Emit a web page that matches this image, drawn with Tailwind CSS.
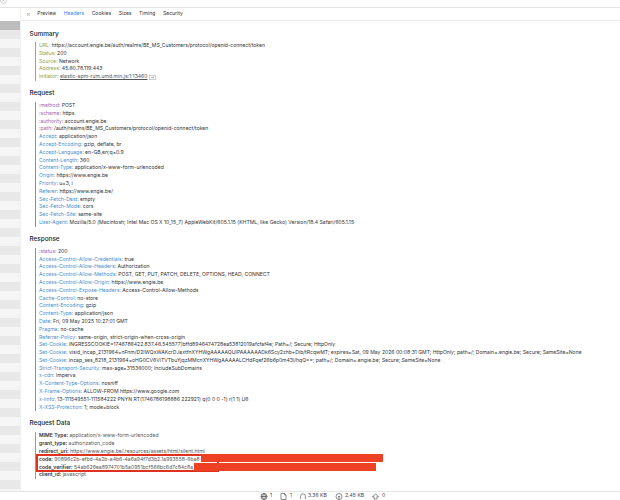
<!DOCTYPE html>
<html lang="en">
<head>
<meta charset="UTF-8">
<title>Network request headers</title>
<script src="https://cdn.jsdelivr.net/npm/@tailwindcss/browser@4"></script>
</head>
<body class="relative w-[620px] h-[500px] overflow-hidden bg-white font-['Inter','Liberation_Sans',sans-serif] text-[5.1px] leading-[7.8px] text-[#333]">
  <div class="h-[8px] border-b border-[#e4e4e4] bg-white overflow-hidden">
    <svg class="-mt-[3px] ml-[0px]" width="7" height="7" viewBox="0 0 7 7" fill="none" stroke="#bbb" stroke-width=".6"><circle cx="3.5" cy="3.5" r="3"/><path d="M2.3 2.3l2.4 2.4M4.7 2.3L2.3 4.7"/></svg>
  </div>
  <div class="flex h-[483px]">
    <!-- request list stripes -->
    <div class="w-[20px] shrink-0 flex flex-col">
      <div class="h-[13px] bg-white"></div>
      <div class="h-[9px] bg-[#bdbdbd]"></div>
      <div class="flex-1 bg-[repeating-linear-gradient(to_bottom,#e8e8e8_0,#e8e8e8_9px,#f5f5f5_9px,#f5f5f5_18px)]"></div>
    </div>
    <div class="flex-1 flex flex-col min-w-0 border-l border-[#f0f0f0]">
      <nav class="h-[13px] shrink-0 flex items-center gap-[7.5px] pl-[5px] border-b border-[#ececec] text-[#333]">
        <span class="text-[#aaa] text-[7px] -mr-[1px]">×</span>
        <span>Preview</span>
        <span class="text-[#3b82f6]">Headers</span>
        <span>Cookies</span>
        <span>Sizes</span>
        <span>Timing</span>
        <span>Security</span>
      </nav>
      <main class="flex-1 pl-[8.5px] pt-[8.5px] min-w-0 whitespace-nowrap">
        <h2 class="text-[6.4px] leading-[8px] font-medium text-[#222]">Summary</h2>
        <div class="mt-[4.5px] ml-[5px] border-l border-[#9fb04c] pl-[3.5px]">
          <div><span class="text-[#8fa24a]">URL:</span> https://account.engie.be/auth/realms/BE_MS_Customers/protocol/openid-connect/token</div>
          <div><span class="text-[#8fa24a]">Status:</span> 200</div>
          <div><span class="text-[#8fa24a]">Source:</span> Network</div>
          <div><span class="text-[#8fa24a]">Address:</span> 45.60.78.119:443</div>
          <div class="flex items-center gap-[2px]"><span><span class="text-[#8fa24a]">Initiator:</span> <span class="underline text-[#555]">elastic-apm-rum.umd.min.js:1:13460</span></span>
            <svg width="7" height="5" viewBox="0 0 7 5" fill="none" stroke="#999" stroke-width=".6"><rect x=".3" y=".3" width="6.4" height="4.4" rx=".8"/><path d="M2 2.5h3M3.8 1.5l1.2 1-1.2 1"/></svg>
          </div>
        </div>

        <h2 class="mt-[8px] text-[6.4px] leading-[8px] font-medium text-[#222]">Request</h2>
        <div class="mt-[5px] ml-[5px] border-l border-[#5b9bd5] pl-[3.5px]">
          <div><span class="text-[#a55fa8]">:method:</span> POST</div>
          <div><span class="text-[#a55fa8]">:scheme:</span> https</div>
          <div><span class="text-[#a55fa8]">:authority:</span> account.engie.be</div>
          <div><span class="text-[#a55fa8]">:path:</span> /auth/realms/BE_MS_Customers/protocol/openid-connect/token</div>
          <div><span class="text-[#4a8ecb]">Accept:</span> application/json</div>
          <div><span class="text-[#4a8ecb]">Accept-Encoding:</span> gzip, deflate, br</div>
          <div><span class="text-[#4a8ecb]">Accept-Language:</span> en-GB,en;q=0.9</div>
          <div><span class="text-[#4a8ecb]">Content-Length:</span> 360</div>
          <div><span class="text-[#4a8ecb]">Content-Type:</span> application/x-www-form-urlencoded</div>
          <div><span class="text-[#4a8ecb]">Origin:</span> https://www.engie.be</div>
          <div><span class="text-[#4a8ecb]">Priority:</span> u=3, i</div>
          <div><span class="text-[#4a8ecb]">Referer:</span> https://www.engie.be/</div>
          <div><span class="text-[#4a8ecb]">Sec-Fetch-Dest:</span> empty</div>
          <div><span class="text-[#4a8ecb]">Sec-Fetch-Mode:</span> cors</div>
          <div><span class="text-[#4a8ecb]">Sec-Fetch-Site:</span> same-site</div>
          <div><span class="text-[#4a8ecb]">User-Agent:</span> Mozilla/5.0 (Macintosh; Intel Mac OS X 10_15_7) AppleWebKit/605.1.15 (KHTML, like Gecko) Version/18.4 Safari/605.1.15</div>
        </div>

        <h2 class="mt-[8px] text-[6.4px] leading-[8px] font-medium text-[#222]">Response</h2>
        <div class="mt-[5px] ml-[5px] border-l border-[#5b9bd5] pl-[3.5px]">
          <div><span class="text-[#a55fa8]">:status:</span> 200</div>
          <div><span class="text-[#4a8ecb]">Access-Control-Allow-Credentials:</span> true</div>
          <div><span class="text-[#4a8ecb]">Access-Control-Allow-Headers:</span> Authorization</div>
          <div><span class="text-[#4a8ecb]">Access-Control-Allow-Methods:</span> POST, GET, PUT, PATCH, DELETE, OPTIONS, HEAD, CONNECT</div>
          <div><span class="text-[#4a8ecb]">Access-Control-Allow-Origin:</span> https://www.engie.be</div>
          <div><span class="text-[#4a8ecb]">Access-Control-Expose-Headers:</span> Access-Control-Allow-Methods</div>
          <div><span class="text-[#4a8ecb]">Cache-Control:</span> no-store</div>
          <div><span class="text-[#4a8ecb]">Content-Encoding:</span> gzip</div>
          <div><span class="text-[#4a8ecb]">Content-Type:</span> application/json</div>
          <div><span class="text-[#4a8ecb]">Date:</span> Fri, 09 May 2025 10:27:01 GMT</div>
          <div><span class="text-[#4a8ecb]">Pragma:</span> no-cache</div>
          <div><span class="text-[#4a8ecb]">Referrer-Policy:</span> same-origin, strict-origin-when-cross-origin</div>
          <div><span class="text-[#4a8ecb]">Set-Cookie:</span> INGRESSCOOKIE=1746786422.837.46.545577|bffd8946474728ea53812019afcfaf4e; Path=/; Secure; HttpOnly</div>
          <div><span class="text-[#4a8ecb]">Set-Cookie:</span> visid_incap_2131964=nFnm/D2IWQxWAKcrDJaxtfnXYHWgAAAAAQUIPAAAAAADk6Scy2zhb+Dib/tRcqwMT; expires=Sat, 09 May 2026 00:08:31 GMT; HttpOnly; path=/; Domain=.engie.be; Secure; SameSite=None</div>
          <div><span class="text-[#4a8ecb]">Set-Cookie:</span> incap_ses_8218_2131964=oHG0CV6ViTVTbuYjqzMMcnXYHWgAAAAALCHdFqef26b6p0m43l/hqQ==; path=/; Domain=.engie.be; Secure; SameSite=None</div>
          <div><span class="text-[#4a8ecb]">Strict-Transport-Security:</span> max-age=31536000; includeSubDomains</div>
          <div><span class="text-[#4a8ecb]">x-cdn:</span> Imperva</div>
          <div><span class="text-[#4a8ecb]">X-Content-Type-Options:</span> nosniff</div>
          <div><span class="text-[#4a8ecb]">X-Frame-Options:</span> ALLOW-FROM https://www.google.com</div>
          <div><span class="text-[#4a8ecb]">x-iinfo:</span> 13-111549551-111584222 PNYN RT(1746786198886 222921) q(0 0 0 -1) r(1 1) U6</div>
          <div><span class="text-[#4a8ecb]">X-XSS-Protection:</span> 1; mode=block</div>
        </div>

        <h2 class="mt-[8px] text-[6.4px] leading-[8px] font-medium text-[#222]">Request Data</h2>
        <div class="mt-[5px] ml-[5px] border-l border-[#999] pl-[3.5px] relative">
          <div><span class="font-semibold">MIME Type:</span> <span class="text-[#555]">application/x-www-form-urlencoded</span></div>
          <div><span class="font-semibold">grant_type:</span> <span class="text-[#555]">authorization_code</span></div>
          <div><span class="font-semibold">redirect_uri:</span> <span class="text-[#555]">https://www.engie.be/.resources/assets/html/silent.html</span></div>
          <div><span class="font-semibold">code:</span> <span class="text-[#555]">90896c2b-efbd-4a2b-a4b6-4a6a94f7d3b2.1a993558-6ba8</span></div>
          <div><span class="font-semibold">code_verifier:</span> <span class="text-[#555]">54ab626ea8974701b5a0951bcf566bc6d7c84c8a</span></div>
          <div><span class="font-semibold">client_id:</span> <span class="text-[#555]">javascript</span></div>
          <!-- redaction over the code values -->
          <div class="absolute left-[0px] top-[21.5px] w-[183px] h-[18.5px] border-2 border-[#e0301e]"></div>
          <div class="absolute left-[165px] top-[22px] w-[182px] h-[7.5px] bg-[#ee4023]"></div>
          <div class="absolute left-[158px] top-[31px] w-[182px] h-[7.5px] bg-[#ee4023]"></div>
        </div>
      </main>
    </div>
  </div>
  <footer class="h-[9px] bg-white border-t border-[#e6e6e6] flex items-center pl-[260px] text-[#444]">
    <svg class="mr-[2px]" width="8" height="7" viewBox="0 0 8 7" fill="none" stroke="#444" stroke-width=".7"><circle cx="4" cy="3.5" r="3"/><ellipse cx="4" cy="3.5" rx="1.3" ry="3"/><path d="M1 3.5h6"/></svg>
    <span class="w-[10px]">1</span>
    <svg class="mr-[3px]" width="7" height="7" viewBox="0 0 7 7" fill="none" stroke="#444" stroke-width=".6"><path d="M1 .5h3.5L6 2v4.5H1zM4.5.5V2H6"/></svg>
    <span class="w-[10px]">1</span>
    <svg class="mr-[2px]" width="6" height="7" viewBox="0 0 6 7" fill="none" stroke="#444" stroke-width=".6"><path d="M.6 6V3.2a2.4 2.4 0 0 1 4.8 0V6"/></svg>
    <span class="w-[27px]">3.36 KB</span>
    <svg class="mr-[2px]" width="8" height="7" viewBox="0 0 8 7" fill="none" stroke="#444" stroke-width=".6"><circle cx="4" cy="3.5" r="3"/><path d="M4 6.5V3M2.8 4.2L4 3l1.2 1.2"/></svg>
    <span class="w-[27px]">2.45 KB</span>
    <svg class="mr-[3px]" width="7" height="7" viewBox="0 0 7 7" fill="none" stroke="#444" stroke-width=".6"><path d="M3.5 1L6.5 3.6H5V6H2V3.6H.5z"/></svg>
    <span>0</span>
  </footer>
</body>
</html>
